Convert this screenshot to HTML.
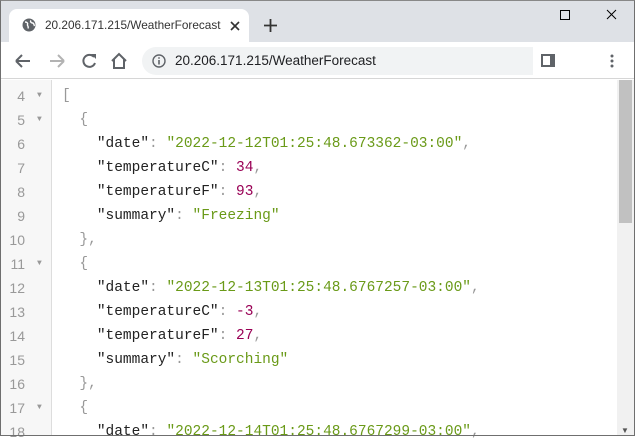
<!DOCTYPE html>
<html><head><meta charset="utf-8"><style>
*{margin:0;padding:0;box-sizing:border-box}
body{width:635px;height:436px;overflow:hidden;background:#fff;font-family:"Liberation Sans",sans-serif;position:relative}
.win{position:absolute;inset:0;border:1px solid #6f6f6f;border-top-color:#888}
.tabbar{position:absolute;left:0;top:0;width:635px;height:42px;background:#dee1e6}
.tab{position:absolute;left:9px;top:9px;width:240px;height:33px;background:#fff;border-radius:8px 8px 0 0}
.tab .t{position:absolute;left:36px;top:9px;font-size:11.8px;color:#333}
.toolbar{position:absolute;left:0;top:42px;width:635px;height:37px;background:#fff;border-bottom:1px solid #d6d6d6}
.addr{position:absolute;left:142px;top:5px;width:391px;height:28px;background:#f1f3f4;border-radius:14px 0 0 14px}
.addr .u{position:absolute;left:33px;top:6px;font-size:13.5px;color:#202124}
.gutter{position:absolute;left:1px;top:80px;width:51px;height:355px;background:#f7f7f7;border-right:1px solid #ddd}
.code{position:absolute;left:0;top:84px;font-family:"Liberation Mono",monospace;font-size:14.5px}
.l{height:24px;line-height:24px;position:relative;white-space:pre}
.n{position:absolute;left:0;width:25px;text-align:right;color:#999;font-family:"Liberation Sans",sans-serif;font-size:14px}
.f{position:absolute;left:37px;color:#999;font-size:8px}
.c{position:absolute;left:62px;color:#999}
.k{color:#222}.s{color:#6a9a18}.m{color:#905}
.sb{position:absolute;left:617px;top:80px;width:17px;height:355px;background:#f1f1f1}
.th{position:absolute;left:2px;top:0;width:13px;height:143px;background:#c1c1c1}
</style></head><body>
<div class="tabbar">
 <div class="tab">
  <svg style="position:absolute;left:13px;top:9px" width="14" height="14" viewBox="0 0 14 14"><circle cx="7" cy="7" r="6.5" fill="#5f6368"/><path d="M3 4c2 0 3 1 2.5 2.5S7 8 6 10.5M9 2.5c-1 1 0 2.5 1.5 2.5s1.5 2 2 3" stroke="#fff" stroke-width="1.4" fill="none"/></svg>
  <div class="t">20.206.171.215/WeatherForecast</div>
  <svg style="position:absolute;left:221px;top:12px" width="10" height="10"><path d="M1 1L9 9M9 1L1 9" stroke="#333" stroke-width="1.6"/></svg>
 </div>
 <svg style="position:absolute;left:264px;top:19px" width="13" height="13"><path d="M6.5 0V13M0 6.5H13" stroke="#333" stroke-width="1.8"/></svg>
 <svg style="position:absolute;left:510px;top:9px" width="120" height="14"><rect x="50.5" y="1.5" width="9" height="9" fill="none" stroke="#000" stroke-width="1"/><path d="M97 1L106 10M106 1L97 10" stroke="#000" stroke-width="1"/></svg>
</div>
<div class="toolbar">
 <svg style="position:absolute;left:14px;top:10px" width="116" height="18" viewBox="0 0 116 18">
  <path d="M2 9H16M2 9L8 3M2 9L8 15" stroke="#5f6368" stroke-width="2" fill="none"/>
  <path d="M50 9H36M50 9L44 3M50 9L44 15" stroke="#b3b3b3" stroke-width="2" fill="none"/>
  <path d="M80 5A6 6 0 1 0 81 11" stroke="#5f6368" stroke-width="2" fill="none"/><path d="M77 2L82 2L82 7Z" fill="#5f6368"/>
  <path d="M98 9L105 2L112 9M100 7V16H110V7" stroke="#5f6368" stroke-width="2" fill="none"/>
 </svg>
 <div class="addr">
  <svg style="position:absolute;left:10px;top:7px" width="14" height="14"><circle cx="7" cy="7" r="6" fill="none" stroke="#5f6368" stroke-width="1.4"/><path d="M7 6V10.5" stroke="#5f6368" stroke-width="1.6"/><circle cx="7" cy="4" r="0.9" fill="#5f6368"/></svg>
  <div class="u">20.206.171.215/WeatherForecast</div>
 </div>
 <svg style="position:absolute;left:541px;top:12px" width="15" height="14"><rect x="0" y="0" width="14" height="13" fill="#5f6368"/><rect x="2" y="2" width="7" height="9" fill="#fff"/></svg>
 <svg style="position:absolute;left:610px;top:12px" width="4" height="14"><circle cx="2" cy="2" r="1.5" fill="#5f6368"/><circle cx="2" cy="7" r="1.5" fill="#5f6368"/><circle cx="2" cy="12" r="1.5" fill="#5f6368"/></svg>
</div>
<div class="gutter"></div>
<div class="code">
<div class="l"><span class="n">4</span><span class="f">▼</span><span class="c">[</span></div>
<div class="l"><span class="n">5</span><span class="f">▼</span><span class="c">  {</span></div>
<div class="l"><span class="n">6</span><span class="c">    <span class="k">"date"</span>: <span class="s">"2022-12-12T01:25:48.673362-03:00"</span>,</span></div>
<div class="l"><span class="n">7</span><span class="c">    <span class="k">"temperatureC"</span>: <span class="m">34</span>,</span></div>
<div class="l"><span class="n">8</span><span class="c">    <span class="k">"temperatureF"</span>: <span class="m">93</span>,</span></div>
<div class="l"><span class="n">9</span><span class="c">    <span class="k">"summary"</span>: <span class="s">"Freezing"</span></span></div>
<div class="l"><span class="n">10</span><span class="c">  },</span></div>
<div class="l"><span class="n">11</span><span class="f">▼</span><span class="c">  {</span></div>
<div class="l"><span class="n">12</span><span class="c">    <span class="k">"date"</span>: <span class="s">"2022-12-13T01:25:48.6767257-03:00"</span>,</span></div>
<div class="l"><span class="n">13</span><span class="c">    <span class="k">"temperatureC"</span>: <span class="m">-3</span>,</span></div>
<div class="l"><span class="n">14</span><span class="c">    <span class="k">"temperatureF"</span>: <span class="m">27</span>,</span></div>
<div class="l"><span class="n">15</span><span class="c">    <span class="k">"summary"</span>: <span class="s">"Scorching"</span></span></div>
<div class="l"><span class="n">16</span><span class="c">  },</span></div>
<div class="l"><span class="n">17</span><span class="f">▼</span><span class="c">  {</span></div>
<div class="l"><span class="n">18</span><span class="c">    <span class="k">"date"</span>: <span class="s">"2022-12-14T01:25:48.6767299-03:00"</span>,</span></div>
</div>
<div class="sb"><div class="th"></div><span style="position:absolute;left:4px;bottom:0;font-size:8px;color:#555">▼</span></div>
<div class="win"></div>
</body></html>
